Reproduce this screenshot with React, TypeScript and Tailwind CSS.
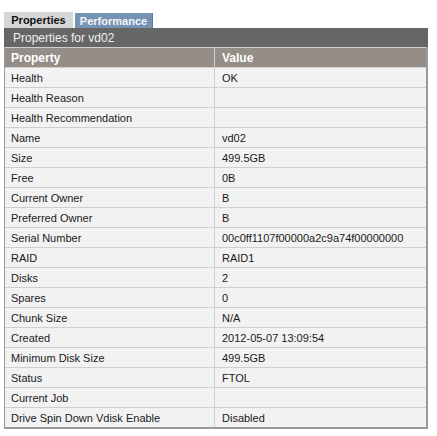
const rows: [string, string][] = [
  ["Health", "OK"],
  ["Health Reason", ""],
  ["Health Recommendation", ""],
  ["Name", "vd02"],
  ["Size", "499.5GB"],
  ["Free", "0B"],
  ["Current Owner", "B"],
  ["Preferred Owner", "B"],
  ["Serial Number", "00c0ff1107f00000a2c9a74f00000000"],
  ["RAID", "RAID1"],
  ["Disks", "2"],
  ["Spares", "0"],
  ["Chunk Size", "N/A"],
  ["Created", "2012-05-07 13:09:54"],
  ["Minimum Disk Size", "499.5GB"],
  ["Status", "FTOL"],
  ["Current Job", ""],
  ["Drive Spin Down Vdisk Enable", "Disabled"],
];

export default function App(): JSX.Element {
  return (
    <div
      className="w-[437px] h-[436px] bg-white pt-[11px] pl-[4px]"
      style={{ fontFamily: '"Liberation Sans", Arial, sans-serif' }}
    >
      <div className="w-[424px]">
        <div className="flex items-end h-[17px] gap-[2px]">
          <div className="w-[69px] h-[16px] bg-[#d6d6d6] text-[11px] font-bold text-[#111] flex items-center justify-center pt-[1px]">
            Properties
          </div>
          <div className="w-[78px] h-[15px] bg-[#7594b3] text-[11px] font-bold text-[#f4f6f8] flex items-center justify-center pt-[1px] border-r border-[#5d7a96]">
            Performance
          </div>
        </div>
        <div className="h-[19px] bg-[#666666] text-[12px] text-[#f0f0f0] flex items-center pl-[9px] pt-[1px]">
          Properties for vd02
        </div>
        <div className="border-l border-r-2 border-b-2 border-[#9a9a9a]">
          <div className="flex h-[20px] bg-[#958e88] text-white text-[12px] font-bold border-t border-[#d0d0d0]">
            <div className="w-[210px] pl-[6px] pt-[1px] flex items-center border-r border-[#d0d0d0]">
              Property
            </div>
            <div className="flex-1 pl-[7px] pt-[1px] flex items-center">Value</div>
          </div>
          {rows.map(([k, v]) => (
            <div
              key={k}
              className="flex h-[20px] bg-[#f2f2f2] text-[11px] text-[#1a1a1a] border-t border-[#cfcfcf]"
            >
              <div className="w-[210px] pl-[6px] pt-[2px] flex items-center border-r border-[#cfcfcf]">
                {k}
              </div>
              <div className="flex-1 pl-[7px] pt-[2px] flex items-center">{v}</div>
            </div>
          ))}
        </div>
      </div>
    </div>
  );
}
